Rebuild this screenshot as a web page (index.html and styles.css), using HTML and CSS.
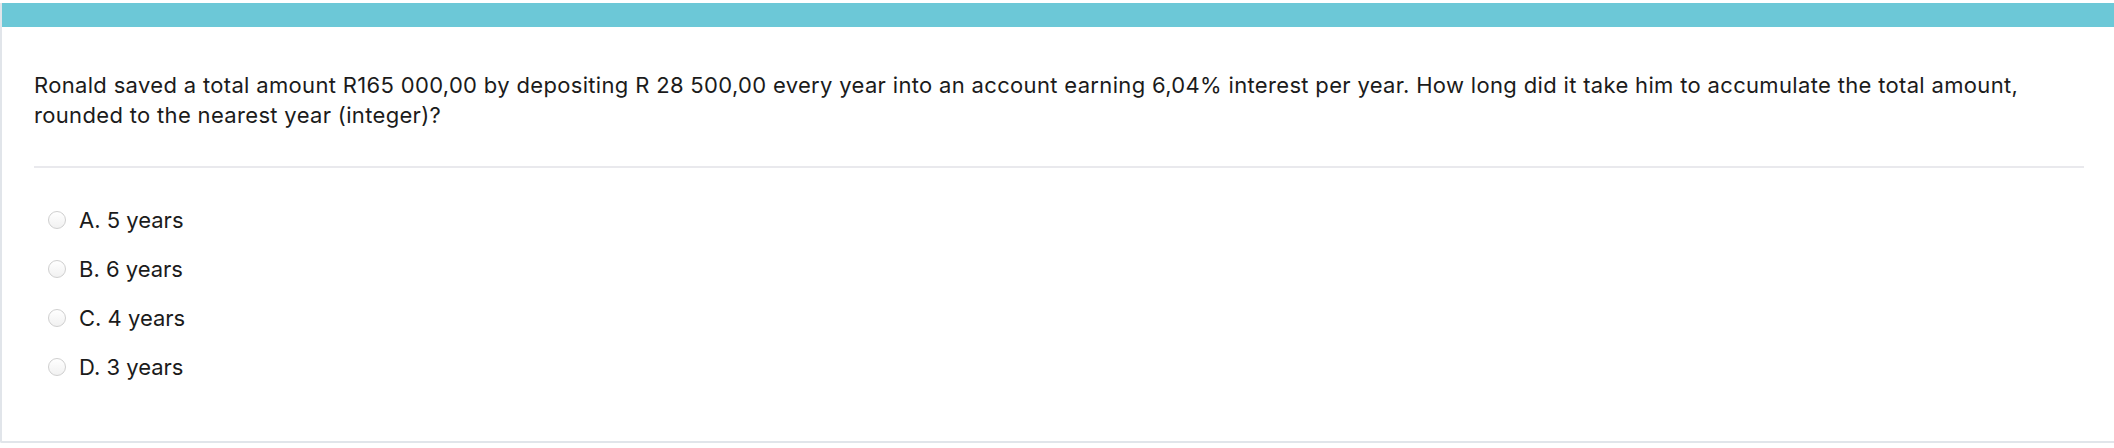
FILE: index.html
```html
<!DOCTYPE html>
<html lang="en">
<head>
<meta charset="utf-8">
<title>Question</title>
<link rel="stylesheet" href="styles.css">
</head>
<body>
<div class="card">
  <div class="card-header"></div>
  <div class="card-body">
    <p class="question">Ronald saved a total amount R165 000,00 by depositing R 28 500,00 every year into an account earning 6,04% interest per year. How long did it take him to accumulate the total amount, rounded to the nearest year (integer)?</p>
    <div class="divider"></div>
    <ul class="options">
      <li class="option"><span class="radio"></span><span class="label">A. 5 years</span></li>
      <li class="option"><span class="radio"></span><span class="label">B. 6 years</span></li>
      <li class="option"><span class="radio"></span><span class="label">C. 4 years</span></li>
      <li class="option"><span class="radio"></span><span class="label">D. 3 years</span></li>
    </ul>
  </div>
</div>
</body>
</html>
```
FILE: styles.css
```css
html, body {
  margin: 0;
  padding: 0;
  background: #ffffff;
}
body {
  font-family: Inter, "Liberation Sans", Arial, sans-serif;
  color: #1b1b1b;
}
.card {
  margin-top: 3px;
  border-left: 2px solid #e1e5ea;
  border-bottom: 2px solid #e1e5ea;
  border-bottom-left-radius: 2px;
  height: 440px;
  box-sizing: border-box;
}
.card-header {
  height: 24px;
  background: #6cc8d7;
}
.card-body {
  padding: 43px 30px 0 32px;
}
.question {
  margin: 0;
  font-size: 22px;
  letter-spacing: 0.33px;
  line-height: 30px;
}
.divider {
  height: 2px;
  background: #e9e9ed;
  margin-top: 36px;
}
.options {
  list-style: none;
  margin: 37px 0 0 0;
  padding: 0;
  display: flex;
  flex-direction: column;
  gap: 19px;
}
.option {
  display: flex;
  align-items: center;
  height: 30px;
  font-size: 22px;
}
.radio {
  width: 16px;
  height: 16px;
  border-radius: 50%;
  border: 1px solid #cfcfcf;
  background: linear-gradient(#ffffff, #f1f1f1);
  margin-left: 14px;
  margin-right: 13px;
  flex: none;
}
```
